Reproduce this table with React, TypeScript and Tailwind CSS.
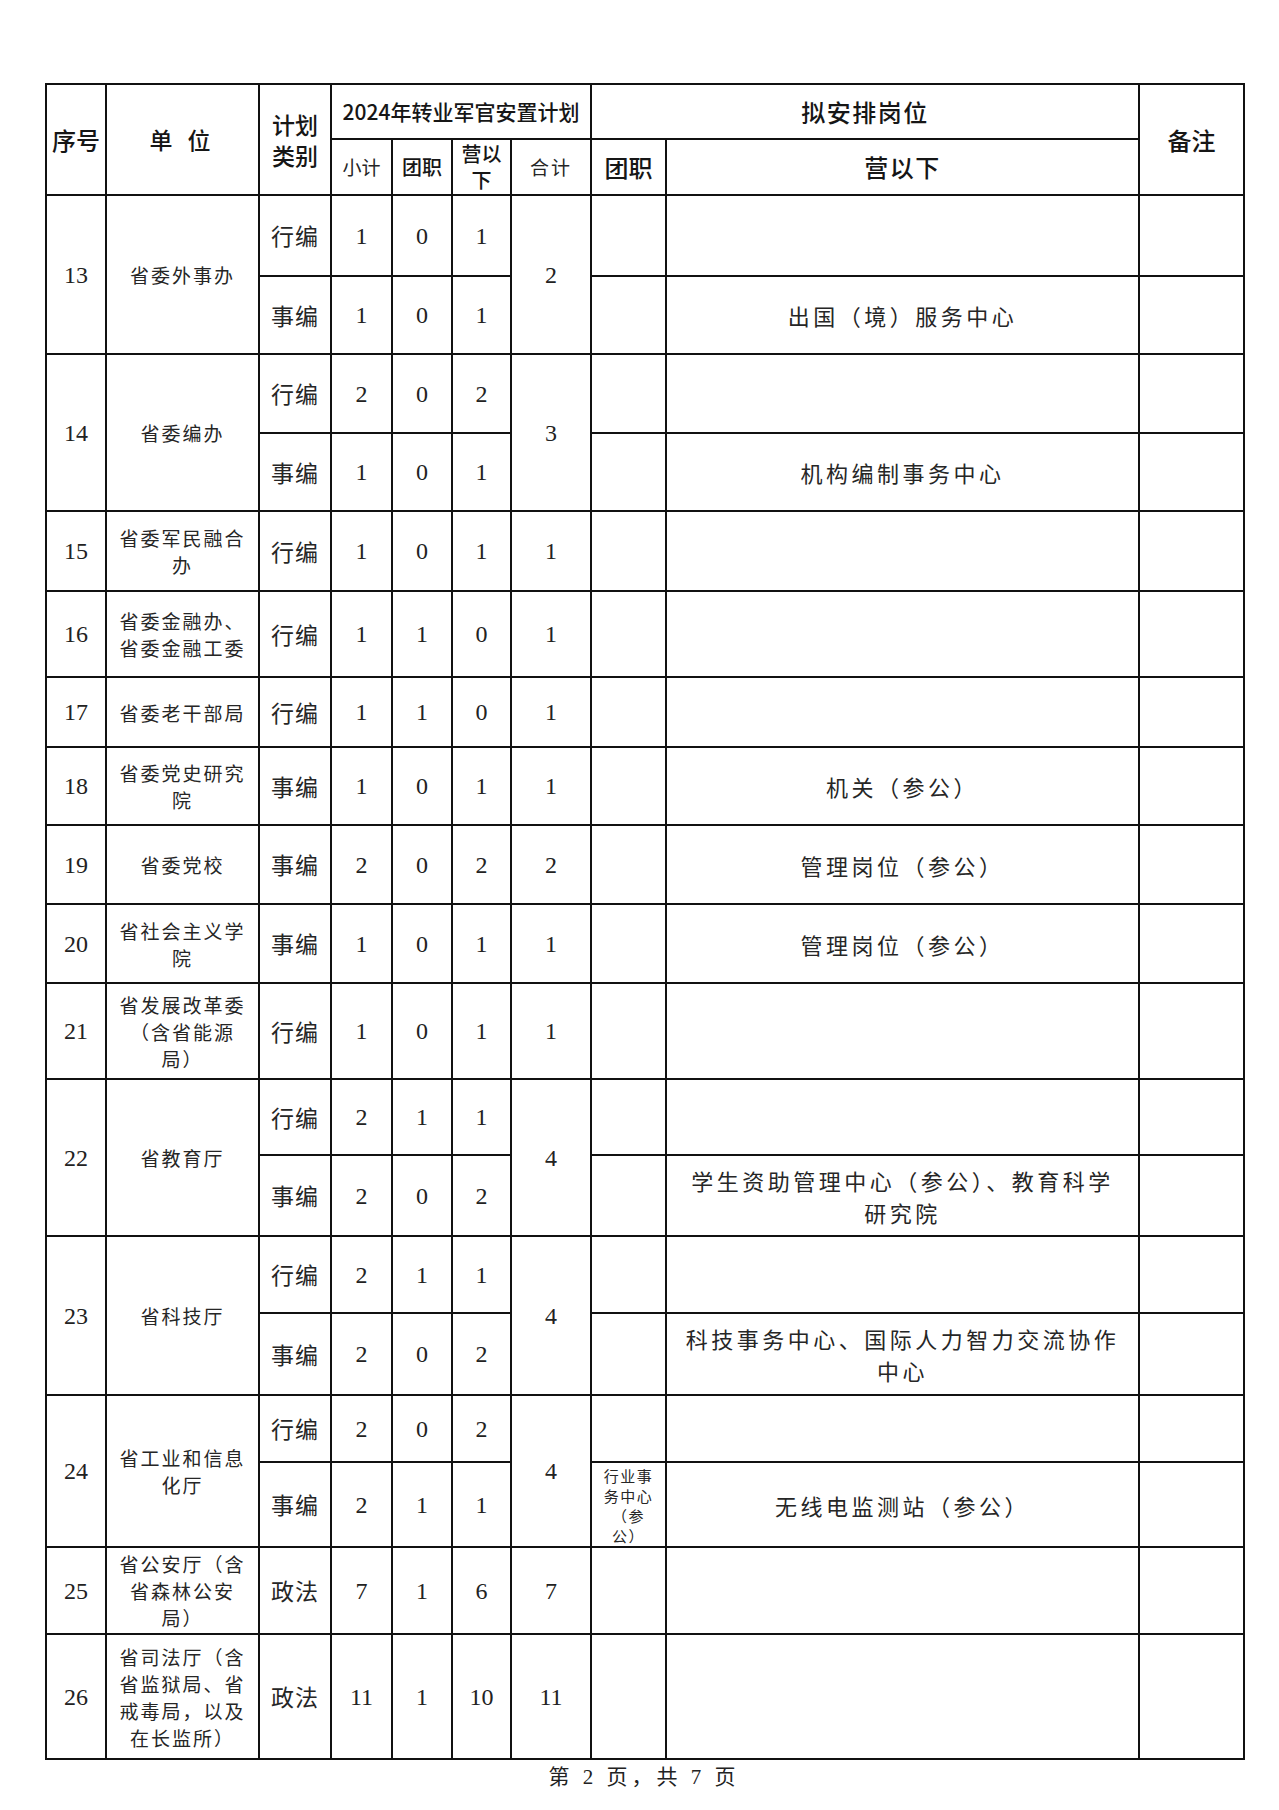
import React from 'react';

type Sub = {
  kind: string;
  sub: string;
  tuan: string;
  ying: string;
  h: string;
  tz?: string[];
  yx?: string[];
};

type Unit = {
  no: string;
  name: string[];
  total: string;
  subs: Sub[];
};

const units: Unit[] = [
  {
    no: '13',
    name: ['省委外事办'],
    total: '2',
    subs: [
      { kind: '行编', sub: '1', tuan: '0', ying: '1', h: 'h-[81px]' },
      { kind: '事编', sub: '1', tuan: '0', ying: '1', h: 'h-[78px]', yx: ['出国（境）服务中心'] },
    ],
  },
  {
    no: '14',
    name: ['省委编办'],
    total: '3',
    subs: [
      { kind: '行编', sub: '2', tuan: '0', ying: '2', h: 'h-[79px]' },
      { kind: '事编', sub: '1', tuan: '0', ying: '1', h: 'h-[78px]', yx: ['机构编制事务中心'] },
    ],
  },
  {
    no: '15',
    name: ['省委军民融合', '办'],
    total: '1',
    subs: [{ kind: '行编', sub: '1', tuan: '0', ying: '1', h: 'h-[80px]' }],
  },
  {
    no: '16',
    name: ['省委金融办、', '省委金融工委'],
    total: '1',
    subs: [{ kind: '行编', sub: '1', tuan: '1', ying: '0', h: 'h-[86px]' }],
  },
  {
    no: '17',
    name: ['省委老干部局'],
    total: '1',
    subs: [{ kind: '行编', sub: '1', tuan: '1', ying: '0', h: 'h-[70px]' }],
  },
  {
    no: '18',
    name: ['省委党史研究', '院'],
    total: '1',
    subs: [{ kind: '事编', sub: '1', tuan: '0', ying: '1', h: 'h-[78px]', yx: ['机关（参公）'] }],
  },
  {
    no: '19',
    name: ['省委党校'],
    total: '2',
    subs: [{ kind: '事编', sub: '2', tuan: '0', ying: '2', h: 'h-[79px]', yx: ['管理岗位（参公）'] }],
  },
  {
    no: '20',
    name: ['省社会主义学', '院'],
    total: '1',
    subs: [{ kind: '事编', sub: '1', tuan: '0', ying: '1', h: 'h-[79px]', yx: ['管理岗位（参公）'] }],
  },
  {
    no: '21',
    name: ['省发展改革委', '（含省能源', '局）'],
    total: '1',
    subs: [{ kind: '行编', sub: '1', tuan: '0', ying: '1', h: 'h-[96px]' }],
  },
  {
    no: '22',
    name: ['省教育厅'],
    total: '4',
    subs: [
      { kind: '行编', sub: '2', tuan: '1', ying: '1', h: 'h-[76px]' },
      {
        kind: '事编', sub: '2', tuan: '0', ying: '2', h: 'h-[81px]',
        yx: ['学生资助管理中心（参公）、教育科学', '研究院'],
      },
    ],
  },
  {
    no: '23',
    name: ['省科技厅'],
    total: '4',
    subs: [
      { kind: '行编', sub: '2', tuan: '1', ying: '1', h: 'h-[77px]' },
      {
        kind: '事编', sub: '2', tuan: '0', ying: '2', h: 'h-[82px]',
        yx: ['科技事务中心、国际人力智力交流协作', '中心'],
      },
    ],
  },
  {
    no: '24',
    name: ['省工业和信息', '化厅'],
    total: '4',
    subs: [
      { kind: '行编', sub: '2', tuan: '0', ying: '2', h: 'h-[67px]' },
      {
        kind: '事编', sub: '2', tuan: '1', ying: '1', h: 'h-[84px]',
        tz: ['行业事', '务中心', '（参', '公）'],
        yx: ['无线电监测站（参公）'],
      },
    ],
  },
  {
    no: '25',
    name: ['省公安厅（含', '省森林公安', '局）'],
    total: '7',
    subs: [{ kind: '政法', sub: '7', tuan: '1', ying: '6', h: 'h-[87px]' }],
  },
  {
    no: '26',
    name: ['省司法厅（含', '省监狱局、省', '戒毒局，以及', '在长监所）'],
    total: '11',
    subs: [{ kind: '政法', sub: '11', tuan: '1', ying: '10', h: 'h-[125px]' }],
  },
];

const cell = 'border-2 border-[#111] p-0 text-center align-middle';
const head = "font-['Noto_Sans_CJK_SC',sans-serif] font-medium text-[#161616] whitespace-nowrap";
const cjk = "font-['Noto_Sans_CJK_SC',sans-serif] font-normal text-[#262626]";
const num = "font-['Liberation_Serif','Noto_Sans_CJK_SC',serif] text-[24px] text-[#222]";

function UnitRows({ u }: { u: Unit }) {
  const n = u.subs.length;
  return (
    <>
      {u.subs.map((s, i) => (
        <tr key={i} className={s.h}>
          {i === 0 && (
            <td rowSpan={n} className={`${cell} ${num}`}>{u.no}</td>
          )}
          {i === 0 && (
            <td rowSpan={n} className={`${cell} ${cjk} text-[19px] leading-[27px] tracking-[2px]`}>
              {u.name.map((l) => (
                <div key={l} className="whitespace-nowrap">{l}</div>
              ))}
            </td>
          )}
          <td className={`${cell} ${cjk} text-[23px] tracking-[1px] text-[#1c1c1c]`}>{s.kind}</td>
          <td className={`${cell} ${num}`}>{s.sub}</td>
          <td className={`${cell} ${num}`}>{s.tuan}</td>
          <td className={`${cell} ${num}`}>{s.ying}</td>
          {i === 0 && (
            <td rowSpan={n} className={`${cell} ${num}`}>{u.total}</td>
          )}
          <td className={`${cell} ${cjk} align-top pt-[3px] text-[15px] leading-[20px] tracking-[1.5px]`}>
            {s.tz?.map((l) => (
              <div key={l} className="whitespace-nowrap">{l}</div>
            ))}
          </td>
          <td className={`${cell} ${cjk} text-[22px] leading-[32px] tracking-[3.5px]`}>
            {s.yx?.map((l) => (
              <div key={l} className="whitespace-nowrap">{l}</div>
            ))}
          </td>
          <td className={cell}></td>
        </tr>
      ))}
    </>
  );
}

export default function App() {
  return (
    <div className="min-h-[1810px] w-[1279px] bg-white pl-[45px] pt-[83px]">
      <table className="w-[1198px] table-fixed border-collapse">
        <colgroup>
          <col className="w-[60px]" />
          <col className="w-[153px]" />
          <col className="w-[72px]" />
          <col className="w-[61px]" />
          <col className="w-[60px]" />
          <col className="w-[59px]" />
          <col className="w-[80px]" />
          <col className="w-[75px]" />
          <col className="w-[473px]" />
          <col className="w-[105px]" />
        </colgroup>
        <thead>
          <tr className="h-[55px]">
            <th rowSpan={2} className={`${cell} ${head} text-[24px]`}>序号</th>
            <th rowSpan={2} className={`${cell} ${head} text-[23px] tracking-[5px]`}>单 位</th>
            <th rowSpan={2} className={`${cell} ${head} text-[23px] leading-[31px]`}>
              <div>计划</div>
              <div>类别</div>
            </th>
            <th colSpan={4} className={`${cell} ${head} text-[21px]`}>2024年转业军官安置计划</th>
            <th colSpan={2} className={`${cell} ${head} text-[24px] tracking-[1.5px]`}>拟安排岗位</th>
            <th rowSpan={2} className={`${cell} ${head} text-[24px]`}>备注</th>
          </tr>
          <tr className="h-[56px]">
            <th className={`${cell} ${cjk} text-[19px]`}>小计</th>
            <th className={`${cell} ${head} text-[20px]`}>团职</th>
            <th className={`${cell} ${head} text-[20px] leading-[26px]`}>
              <div>营以</div>
              <div>下</div>
            </th>
            <th className={`${cell} ${cjk} text-[19px] tracking-[2px]`}>合计</th>
            <th className={`${cell} ${head} text-[24px]`}>团职</th>
            <th className={`${cell} ${head} text-[24px] tracking-[1.5px]`}>营以下</th>
          </tr>
        </thead>
        <tbody>
          {units.map((u) => (
            <UnitRows key={u.no} u={u} />
          ))}
        </tbody>
      </table>
      <div className="w-[1198px] pt-[4px] text-center font-['Liberation_Serif','Noto_Sans_CJK_SC',serif] text-[21px] leading-[26px] tracking-[4px] text-[#222]">
        第 2 页，共 7 页
      </div>
    </div>
  );
}
